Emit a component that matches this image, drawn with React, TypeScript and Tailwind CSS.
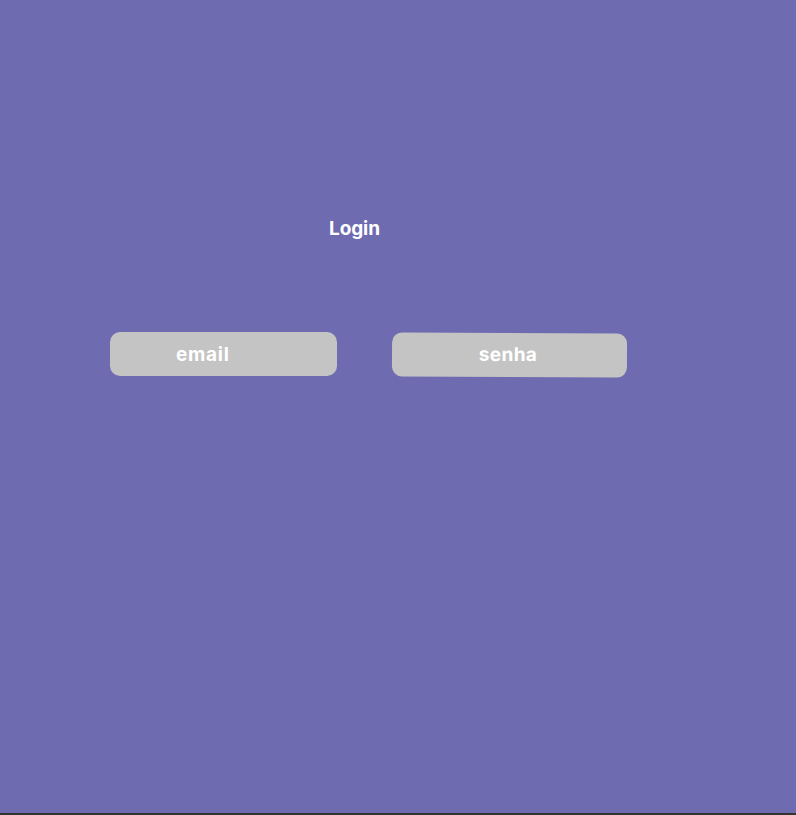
import React from 'react';

const font = { fontFamily: 'Inter, "Noto Sans", sans-serif' };

export default function App() {
  return (
    <div className="flex flex-col w-[796px] h-[815px] bg-[#333331]" style={font}>
      <div className="flex flex-col h-[813px] bg-[#6e6bb0]">
        <div className="pt-[216px] pl-[329px]">
          <h1 className="text-[19px] leading-[26px] font-bold text-white tracking-[-0.1px]">Login</h1>
        </div>
        <div className="flex items-start mt-[90px] pl-[110px] gap-[55px]">
          <div className="w-[227px] h-[44px] rounded-[10px] bg-[#c4c4c4] flex items-center pl-[66px]">
            <span className="text-[19px] font-bold text-white tracking-[0.7px] translate-y-[1px]">email</span>
          </div>
          <div className="w-[235px] h-[44px] mt-[1px] rounded-[10px] bg-[#c4c4c4] flex items-center justify-center rotate-[0.3deg]">
            <span className="text-[19px] font-bold text-white tracking-[0.4px] -ml-[3px] -mt-[2px] translate-y-[1px]">senha</span>
          </div>
        </div>
      </div>
    </div>
  );
}
